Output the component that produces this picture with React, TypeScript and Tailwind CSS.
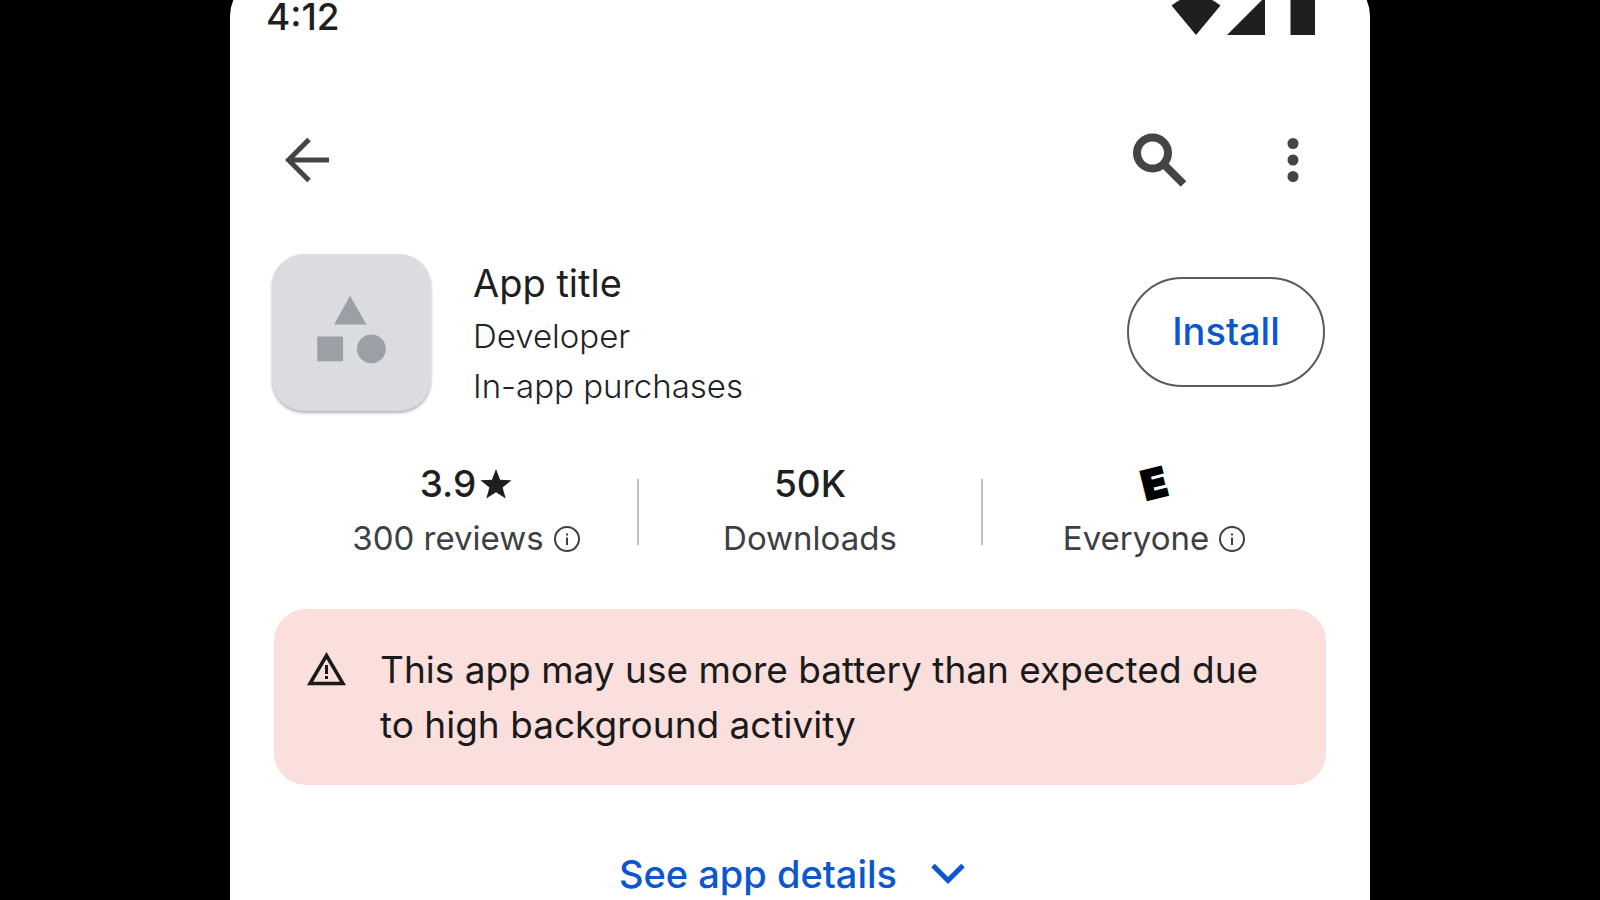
import type { ReactNode } from "react";

function InfoIcon() {
  return (
    <svg viewBox="0 0 26 26" className="size-[26px] shrink-0" aria-hidden="true">
      <circle cx="13" cy="13" r="12" fill="none" stroke="currentColor" strokeWidth="2" />
      <path d="M12 11.5h2V19h-2zM12 7.5h2v2h-2z" fill="currentColor" />
    </svg>
  );
}

function StatusBar() {
  return (
    <header className="flex h-10 items-end justify-between pl-9 pr-[54px] text-[#1f1f1f]">
      <time className="pb-[3px] text-[37px] font-medium leading-8">4:12</time>
      <svg viewBox="0 0 145 40" className="h-10 w-[145px]" fill="currentColor" aria-hidden="true">
        <path d="M25 39 0.5 9.5Q25 -10 49.5 9.5z" />
        <path d="M56 39 94 1v38z" />
        <path d="M119.500 3h6V0h12v3h6.500v36h-24.500z" />
      </svg>
    </header>
  );
}

function Toolbar() {
  return (
    <nav className="flex items-center justify-between pl-[55px] pr-[71px] text-[#444444]">
      <button type="button" aria-label="Back">
        <svg viewBox="0 0 44 44" className="size-11" fill="none" stroke="currentColor" strokeWidth="5">
          <path d="M44 22H4M24 1.5 3.5 22 24 42.5" />
        </svg>
      </button>
      <div className="flex items-center gap-[100px]">
        <button type="button" aria-label="Search">
          <svg viewBox="0 0 54 54" className="size-[54px]" fill="none" stroke="currentColor" strokeWidth="8">
            <circle cx="19.500" cy="20" r="15.5" />
            <path d="M30.500 31 50.5 51" />
          </svg>
        </button>
        <button type="button" aria-label="More options">
          <svg viewBox="0 0 12 46" className="h-[46px] w-3" fill="currentColor">
            <circle cx="6" cy="6.5" r="5.5" />
            <circle cx="6" cy="23" r="5.5" />
            <circle cx="6" cy="39.5" r="5.5" />
          </svg>
        </button>
      </div>
    </nav>
  );
}

function AppHeader() {
  return (
    <section className="flex items-center pl-[42px] pr-[45px]">
      <div className="h-[157px] w-[159px] shrink-0 rounded-[32px] bg-[#dadce0] shadow-[0_2px_3px_rgba(60,64,67,0.4)]">
        <svg viewBox="0 0 158 158" className="size-full" fill="#9aa0a5" aria-hidden="true">
          <path d="M77.500 42 94 71H61.500z" />
          <path d="M44.500 83h26v25h-26z" />
          <circle cx="99" cy="95.500" r="14.500" />
        </svg>
      </div>
      <div className="ml-[42px] grow text-[#202427]">
        <h1 className="text-[38px] leading-[56px] text-[#1f1f1f]">App title</h1>
        <p className="text-[33px] font-light leading-[50px]">Developer</p>
        <p className="text-[33px] font-light leading-[50px]">In-app purchases</p>
      </div>
      <button
        type="button"
        className="mb-0.5 h-[110px] w-[198px] shrink-0 rounded-full border-2 border-[#5a5a5a] text-[38px] font-medium text-[#0b57d0]"
      >
        Install
      </button>
    </section>
  );
}

function Stat({ value, label, info }: { value: ReactNode; label: string; info?: boolean }) {
  return (
    <li className="flex flex-col items-center">
      <span className="flex h-14 items-center gap-1 text-[37px] font-medium text-[#1f1f1f]">{value}</span>
      <span className="flex h-[54px] items-center gap-[10px] text-[33px] text-[#3c4043]">
        {label}
        {info && <InfoIcon />}
      </span>
    </li>
  );
}

function Divider() {
  return <li className="mt-[23px] h-[66px] w-[2px] bg-[#c0c0c0]" aria-hidden="true" />;
}

function Stats() {
  return (
    <ul className="grid grid-cols-[1fr_2px_1fr_2px_1fr] pl-[65px] pr-[45px]">
      <Stat
        value={
          <>
            3.9
            <svg viewBox="0 0 32 30" className="h-[30px] w-8" fill="currentColor" aria-label="stars">
              <path d="M16 0l4.100 10.800 11.500.5-9 7.200 3.100 11.100L16 23.200 6.300 29.600l3.100-11.100-9-7.200 11.500-.5z" />
            </svg>
          </>
        }
        label="300 reviews"
        info
      />
      <Divider />
      <Stat value="50K" label="Downloads" />
      <Divider />
      <Stat
        value={
          <span className="-rotate-[14deg] text-[40px] font-black leading-none text-black [-webkit-text-stroke:2px_#000]">
            E
          </span>
        }
        label="Everyone"
        info
      />
    </ul>
  );
}

function BatteryWarning() {
  return (
    <section className="mx-11 flex items-start rounded-[32px] bg-[#fadfdc] py-[33px] pl-8 pr-10 text-[#1a1a1a]">
      <svg viewBox="0 0 40 34" className="mt-[10px] h-[34px] w-10 shrink-0" aria-hidden="true">
        <path d="M20.500 3.500 37 31.500H4z" fill="none" stroke="currentColor" strokeWidth="3.500" />
        <path d="M19 13h3v9h-3zM19 24h3v3h-3z" fill="currentColor" />
      </svg>
      <p className="ml-[34px] text-[37px] leading-[55px]">
        This app may use more battery than expected due to high background activity
      </p>
    </section>
  );
}

export default function App() {
  return (
    <div className="h-screen overflow-hidden bg-black font-['Inter',sans-serif]">
      <main className="mx-auto -mt-6 min-h-[calc(100vh+24px)] w-full max-w-[1140px] rounded-t-[40px] bg-white pt-5">
        <StatusBar />
        <div className="mt-[97px]">
          <Toolbar />
        </div>
        <div className="mt-[67px]">
          <AppHeader />
        </div>
        <div className="mt-[45px]">
          <Stats />
        </div>
        <div className="mt-[43px]">
          <BatteryWarning />
        </div>
        <button
          type="button"
          className="mx-auto mt-[60px] flex items-center gap-[34px] pr-4 text-[38px] font-medium leading-[58px] text-[#0b57d0]"
        >
          See app details
          <svg viewBox="0 0 34 22" className="h-[22px] w-[34px]" fill="none" stroke="currentColor" strokeWidth="5" aria-hidden="true">
            <path d="M2 2.500 17 17.500 32 2.500" />
          </svg>
        </button>
      </main>
    </div>
  );
}
